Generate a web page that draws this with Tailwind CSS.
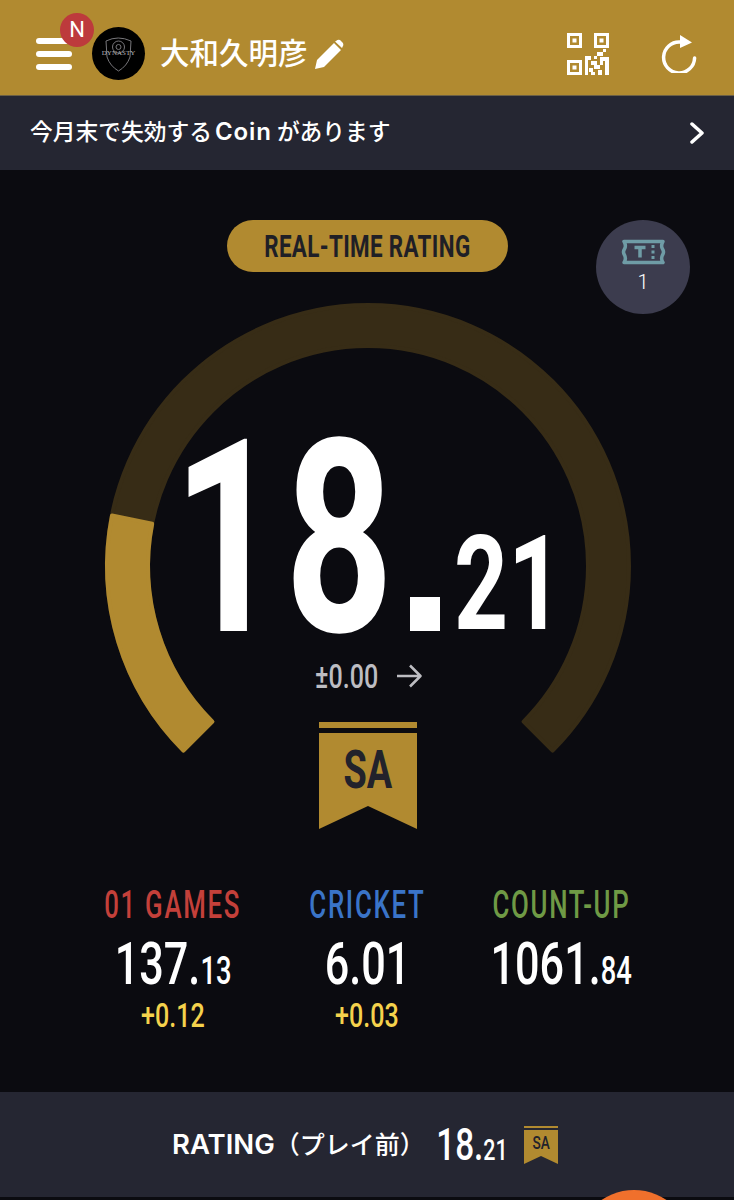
<!DOCTYPE html>
<html lang="ja">
<head>
<meta charset="utf-8">
<script src="https://cdn.jsdelivr.net/npm/@tailwindcss/browser@4"></script>
</head>
<body class="bg-[#0b0b10] font-['Inter','Noto_Sans_CJK_JP',sans-serif]">
<div class="relative w-[734px] h-[1200px] overflow-hidden flex flex-col bg-[#0b0b10] text-white">
  <header class="h-[96px] shrink-0 bg-[#b18a30] border-b border-[#6b5f45] flex items-center pl-[36px] pr-[37px]">
    <div class="relative w-[36px] h-[32px] flex flex-col justify-between mt-[13px]">
      <span class="block h-[6px] rounded-full bg-white"></span>
      <span class="block h-[6px] rounded-full bg-white"></span>
      <span class="block h-[6px] rounded-full bg-white"></span>
      <span class="absolute left-[24px] top-[-25px] w-[34px] h-[34px] rounded-full bg-[#bd3a3c] flex items-center justify-center text-[22px] font-['Roboto'] leading-none">N</span>
    </div>
    <div class="ml-[20px] w-[53px] h-[53px] rounded-full bg-black flex items-center justify-center relative overflow-hidden mt-[12px]">
      <svg class="absolute inset-0" width="53" height="53" viewBox="0 0 53 53" fill="none" stroke="#77767a" stroke-width="1"><path d="M14 14 Q26 8 39 14 L38 30 Q35 39 26.500 44 Q18 39 15 30Z"/><circle cx="26.500" cy="20" r="6"/><circle cx="26.500" cy="20" r="2.500"/></svg>
      <span class="relative text-[7px] leading-none font-['Liberation_Serif'] text-[#b8b8b8]">DYNASTY</span>
    </div>
    <h1 class="ml-[15px] text-[29.500px] leading-none font-['Noto_Sans_CJK_JP'] font-medium mt-[9px] whitespace-nowrap">大和久明彦</h1>
    <svg class="ml-[7px] mt-[12px]" width="29" height="30" viewBox="0 0 29 30" fill="#fff"><path d="M0 30 L2 21 L19 4 L26 11 L9 28Z M21 2 Q23 0 25 1 L28 4 Q29 6 27.500 8 L27 9 L20 2.500Z"/></svg>
    <svg class="ml-auto mt-[13px]" width="42" height="42" viewBox="0 0 42 42" fill="#fff">
      <path fill-rule="evenodd" d="M0 0H15V15H0Z M3 3V12H12V3Z M27 0H42V15H27Z M30 3V12H39V3Z M0 27H15V42H0Z M3 30V39H12V30Z"/>
      <path d="M5.500 5.500H9.500V9.500H5.500Z M32.500 5.500H36.500V9.500H32.500Z M5.500 32.500H9.500V36.500H5.500Z"/>
      <path d="M36 16H39V19H36Z M30 19H36V23H30Z M18 23H24V27H18Z M27 23H30V26H27Z M33 24H42V28H33Z M18 27H21V42H18Z M24 28H30V32H24Z M33 28H36V32H33Z M38 28H42V42H38Z M27 32H33V36H27Z M22 35H26V39H22Z M31 37H35V42H31Z M24 39H28V42H24Z"/>
    </svg>
    <svg class="ml-[52px] mt-[11px]" width="36" height="40" viewBox="0 0 36 40" fill="none">
      <path d="M19 9 A15.500 15.500 0 1 0 33.600 25" stroke="#fff" stroke-width="3.500" stroke-linecap="round"/>
      <path d="M19 2 L31 9.500 L19 15Z" fill="#fff"/>
    </svg>
  </header>

  <a class="h-[74px] shrink-0 bg-[#252632] flex items-center pl-[30px] pr-[30px] text-[22.750px] font-medium font-['Noto_Sans_CJK_JP']">
    <span class="flex items-center leading-none pb-[3px] whitespace-nowrap"><span>今月末で失効する</span><span class="font-['Inter'] font-semibold text-[24px] tracking-[0.9px] ml-[3px] mr-[5px]">Coin</span><span>があります</span></span>
    <svg class="ml-auto" width="14" height="22" viewBox="0 0 14 22" fill="none" stroke="#fff" stroke-width="3.500" stroke-linecap="round" stroke-linejoin="round"><path d="M2 2 L12 11 L2 20"/></svg>
  </a>

  <main class="relative h-[922px] shrink-0 flex flex-col items-center pt-[50px] bg-[#0b0b10]">
    <div class="w-[281px] h-[52px] rounded-full bg-[#b18a30] flex items-center justify-center overflow-hidden">
      <span class="block scale-x-[.7] whitespace-nowrap font-['Roboto'] font-bold text-[32px] leading-none text-[#1f1f26] tracking-[.5px]">REAL-TIME RATING</span>
    </div>
    <div class="absolute left-[596px] top-[50px] w-[94px] h-[94px] rounded-full bg-[#3c3c4e] flex flex-col items-center pt-[19px]">
      <svg width="45" height="26" viewBox="0 0 45 26" fill="none" stroke="#6f9ca6" stroke-width="3.500"><path d="M3 2.500 H42 Q39.500 7 41.500 10 Q43.500 13 41.500 16 Q39.500 20 42 23.500 H3 Q5.500 20 3.500 16 Q1.500 13 3.500 10 Q5.500 7 3 2.500Z" stroke-linejoin="round"/><path d="M32 6 V20" stroke-dasharray="3 2.500" stroke-width="3"/><path d="M13.500 8.500 H24.500 M19 8.500 V18.500" stroke-width="3.500"/></svg>
      <span class="mt-[7px] text-[20px] leading-none font-['Roboto'] font-light">1</span>
    </div>

    <section class="relative w-[526px] h-[527px] mt-[31px] ml-[2px] flex flex-col items-center">
      <svg class="absolute left-[1px] top-0 overflow-visible" width="526" height="460" viewBox="105 303 526 460">
        <path d="M182.400 750.600 A261 261 0 1 1 551.600 750.600 L522.600 721.600 A220 220 0 1 0 211.400 721.600Z" fill="#372c16" stroke="#372c16" stroke-width="4" stroke-linejoin="round"/>
        <path d="M182.400 750.600 A261 261 0 0 1 111 515.500 L151.200 523.800 A220 220 0 0 0 211.400 721.600Z" fill="#b18a30" stroke="#b18a30" stroke-width="4" stroke-linejoin="round"/>
      </svg>
      <div class="relative h-[360px] w-full font-['Roboto'] font-bold leading-none">
        <div class="absolute left-[47px] top-[136px] w-[265px] flex justify-center"><span class="block scale-x-[.7] whitespace-nowrap text-[270px] tracking-[5px] leading-[200px] text-white">18</span></div>
        <div class="absolute left-[305px] top-[294px] w-[30px] h-[34px] bg-white"></div>
        <div class="absolute left-[347px] top-[216px] w-[112px] flex justify-center"><span class="block scale-x-[.72] whitespace-nowrap text-[131px] leading-[131px] text-white">21</span></div>
      </div>
      <div class="flex items-center h-[26px] text-[#bdbdc2]">
        <span class="w-[65px] flex justify-center"><span class="block scale-x-[.76] whitespace-nowrap text-[33px] leading-none font-['Roboto'] font-medium">±0.00</span></span>
        <svg class="ml-[17px]" width="25" height="24" viewBox="0 0 25 24" fill="none" stroke="#bdbdc2" stroke-width="2.500" stroke-linejoin="round"><path d="M0 12 H23 M13 1.500 L23.500 12 L13 22.500"/></svg>
      </div>
      <div class="relative mt-[33px] w-[98px] h-[108px] shrink-0">
        <svg class="absolute inset-0" width="98" height="108" viewBox="0 0 98 108" fill="#b18a30"><path d="M0 0H98V6H0Z M0 11H98V107L49 84 L0 107Z"/></svg>
        <div class="relative pt-[25px] flex justify-center"><span class="block scale-x-[.7] font-['Roboto'] font-bold text-[54px] leading-[46px] text-[#22222b]">SA</span></div>
      </div>
    </section>

    <section class="w-full grid grid-cols-[194px_194px_194px] justify-center mt-[55px] font-['Roboto']">
      <div class="flex flex-col items-center">
        <span class="block scale-x-[.68] whitespace-nowrap text-[38px] leading-[40px] font-medium text-[#c4403a] tracking-[2.500px]">01 GAMES</span>
        <div class="mt-[9px] h-[60px] flex items-baseline justify-center scale-x-[.72] whitespace-nowrap font-medium"><span class="text-[60px] leading-[60px]">137.</span><span class="text-[38px] leading-none">13</span></div>
        <span class="mt-[4px] block scale-x-[.76] whitespace-nowrap text-[33px] leading-[36px] text-[#f5d24c] font-medium">+0.12</span>
      </div>
      <div class="flex flex-col items-center">
        <span class="block scale-x-[.68] whitespace-nowrap text-[38px] leading-[40px] font-medium text-[#3a74c8] tracking-[2.500px]">CRICKET</span>
        <span class="mt-[9px] block scale-x-[.72] whitespace-nowrap text-[60px] leading-[60px] font-medium">6.01</span>
        <span class="mt-[4px] block scale-x-[.76] whitespace-nowrap text-[33px] leading-[36px] text-[#f5d24c] font-medium">+0.03</span>
      </div>
      <div class="flex flex-col items-center">
        <span class="block scale-x-[.68] whitespace-nowrap text-[38px] leading-[40px] font-medium text-[#6f9a45] tracking-[2.500px]">COUNT-UP</span>
        <div class="mt-[9px] h-[60px] flex items-baseline justify-center scale-x-[.72] whitespace-nowrap font-medium"><span class="text-[60px] leading-[60px]">1061.</span><span class="text-[38px] leading-none">84</span></div>
      </div>
    </section>
  </main>

  <footer class="h-[105px] shrink-0 bg-[#252632] flex items-center pl-[172px]">
    <span class="w-[261px] text-[27.500px] leading-none font-semibold font-['Inter','Noto_Sans_CJK_JP'] whitespace-nowrap">RATING<span class="font-['Noto_Sans_CJK_JP'] font-medium text-[25px]">（プレイ前）</span></span>
    <div class="w-[78px] flex items-baseline justify-center scale-x-[.74] whitespace-nowrap font-['Roboto'] font-medium"><span class="text-[45px] leading-none">18.</span><span class="text-[29px] leading-none">21</span></div>
    <div class="relative ml-[13px] w-[34px] h-[38px]">
      <svg class="absolute inset-0" width="34" height="38" viewBox="0 0 34 38" fill="#b18a30"><path d="M0 0H34V2H0Z M0 4H34V38L17 30 L0 38Z"/></svg>
      <div class="relative pt-[9px] flex justify-center"><span class="block scale-x-[.72] font-['Roboto'] font-medium text-[19px] leading-[16px] text-[#22222b]">SA</span></div>
    </div>
  </footer>
  <div class="absolute left-0 top-[1197px] w-full h-[3px] bg-[#0b0b10]"></div>
  <div class="absolute left-[576px] top-[1190px] w-[116px] h-[116px] rounded-full bg-[#f0702c]"></div>
</div>
</body>
</html>
